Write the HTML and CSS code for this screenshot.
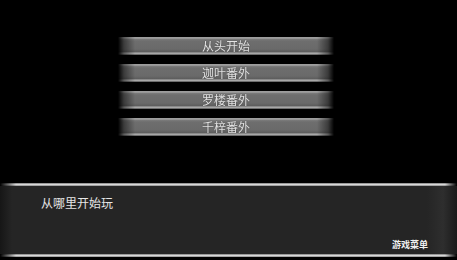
FILE: index.html
```html
<!DOCTYPE html>
<html lang="zh">
<head>
<meta charset="utf-8">
<link rel="stylesheet" href="styles.css">
</head>
<body>
<div class="screen">
  <div class="menu">
    <div class="btn"><span>从头开始</span></div>
    <div class="btn"><span>迦叶番外</span></div>
    <div class="btn"><span>罗楼番外</span></div>
    <div class="btn"><span>千梓番外</span></div>
  </div>
  <div class="panel">
    <div class="line"></div>
    <div class="panel-body">
      <div class="msg">从哪里开始玩</div>
      <div class="sys">游戏菜单</div>
    </div>
    <div class="line"></div>
  </div>
</div>
</body>
</html>
```
FILE: styles.css
```css
html, body {
  margin: 0;
  padding: 0;
  background: #000;
}
.screen {
  width: 457px;
  height: 260px;
  background: #000;
  display: flex;
  flex-direction: column;
  font-family: "Noto Sans CJK SC", "Noto Sans", sans-serif;
  overflow: hidden;
}
.menu {
  display: flex;
  flex-direction: column;
  align-items: center;
  gap: 9px;
  padding-top: 37px;
  padding-right: 5px;
}
.btn {
  width: 216px;
  height: 18px;
  box-sizing: border-box;
  display: flex;
  align-items: center;
  justify-content: center;
  background: linear-gradient(to bottom,
    #8a8a8a 0px, #b0b0b0 1px, #7c7c7c 2px, #6e6e6e 4px, #6a6a6a 12px,
    #5c5c5c 15px, #b8b8b8 16px, #969696 17px, #444 18px);
  -webkit-mask-image: linear-gradient(to right, transparent 0, rgba(0,0,0,0.55) 6px, #000 17px, #000 calc(100% - 17px), rgba(0,0,0,0.55) calc(100% - 6px), transparent 100%);
  mask-image: linear-gradient(to right, transparent 0, rgba(0,0,0,0.55) 6px, #000 17px, #000 calc(100% - 17px), rgba(0,0,0,0.55) calc(100% - 6px), transparent 100%);
}
.btn span {
  color: #e4e4e4;
  font-size: 12px;
  line-height: 18px;
  text-shadow: 0 0 1px #333;
}
.panel {
  margin-top: 47px;
  display: flex;
  flex-direction: column;
}
.line {
  height: 3px;
  background: linear-gradient(to bottom, #7a7a7a, #d8d8d8 50%, #8a8a8a);
  -webkit-mask-image: linear-gradient(to right, transparent 0, #000 16px, #000 calc(100% - 12px), transparent 100%);
  mask-image: linear-gradient(to right, transparent 0, #000 16px, #000 calc(100% - 12px), transparent 100%);
}
.panel-body {
  height: 68px;
  background: linear-gradient(to right, #161616 0, #252525 12px, #252525 calc(100% - 30px), #2e2e2e calc(100% - 14px), #1a1a1a 100%);
  display: flex;
  flex-direction: column;
  justify-content: space-between;
  padding: 9px 29px 2px 41px;
  box-sizing: border-box;
}
.msg {
  color: #e6e6e6;
  font-size: 12px;
  line-height: 16px;
}
.sys {
  align-self: flex-end;
  color: #f0f0f0;
  font-size: 9px;
  font-weight: bold;
  line-height: 14px;
}
```
